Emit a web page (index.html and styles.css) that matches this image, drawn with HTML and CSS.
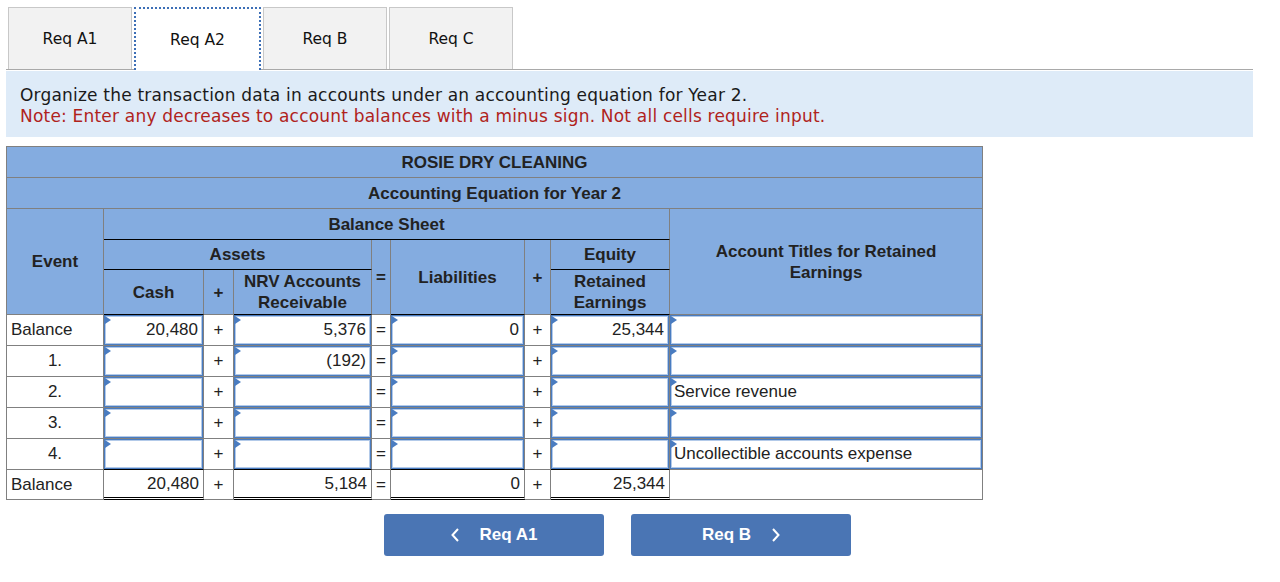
FILE: index.html
```html
<!DOCTYPE html>
<html lang="en">
<head>
<meta charset="utf-8">
<title>Accounting Equation</title>
<link rel="stylesheet" href="styles.css">
</head>
<body>
<div class="page">
  <div class="tabs">
    <div class="tab">Req A1</div>
    <div class="tab active">Req A2</div>
    <div class="tab">Req B</div>
    <div class="tab">Req C</div>
  </div>

  <div class="instructions">
    <p>Organize the transaction data in accounts under an accounting equation for Year 2.</p>
    <p class="note">Note: Enter any decreases to account balances with a minus sign. Not all cells require input.</p>
  </div>

  <table class="eq">
    <colgroup>
      <col class="c-event">
      <col class="c-cash">
      <col class="c-op1">
      <col class="c-nrv">
      <col class="c-op2">
      <col class="c-liab">
      <col class="c-op3">
      <col class="c-re">
      <col class="c-titles">
    </colgroup>
    <thead>
      <tr class="h31"><th colspan="9">ROSIE DRY CLEANING</th></tr>
      <tr class="h31"><th colspan="9">Accounting Equation for Year 2</th></tr>
      <tr class="h31">
        <th rowspan="3">Event</th>
        <th colspan="7" class="bb">Balance Sheet</th>
        <th rowspan="3" class="titles">Account Titles for Retained Earnings</th>
      </tr>
      <tr class="h30">
        <th colspan="3" class="bb">Assets</th>
        <th rowspan="2" class="op">=</th>
        <th rowspan="2" class="bb">Liabilities</th>
        <th rowspan="2" class="op">+</th>
        <th class="bb">Equity</th>
      </tr>
      <tr class="h45">
        <th class="bb">Cash</th>
        <th class="op">+</th>
        <th class="bb">NRV Accounts Receivable</th>
        <th class="bb">Retained Earnings</th>
      </tr>
    </thead>
    <tbody>
      <tr class="h31">
        <td class="ev-left">Balance</td>
        <td class="in"><div class="inp">20,480</div></td>
        <td class="op">+</td>
        <td class="in"><div class="inp">5,376</div></td>
        <td class="op">=</td>
        <td class="in"><div class="inp">0</div></td>
        <td class="op">+</td>
        <td class="in"><div class="inp">25,344</div></td>
        <td class="in"><div class="inp text"></div></td>
      </tr>
      <tr class="h31">
        <td class="ev">1.</td>
        <td class="in"><div class="inp"></div></td>
        <td class="op">+</td>
        <td class="in"><div class="inp">(192)</div></td>
        <td class="op">=</td>
        <td class="in"><div class="inp"></div></td>
        <td class="op">+</td>
        <td class="in"><div class="inp"></div></td>
        <td class="in"><div class="inp text"></div></td>
      </tr>
      <tr class="h31">
        <td class="ev">2.</td>
        <td class="in"><div class="inp"></div></td>
        <td class="op">+</td>
        <td class="in"><div class="inp"></div></td>
        <td class="op">=</td>
        <td class="in"><div class="inp"></div></td>
        <td class="op">+</td>
        <td class="in"><div class="inp"></div></td>
        <td class="in"><div class="inp text">Service revenue</div></td>
      </tr>
      <tr class="h31">
        <td class="ev">3.</td>
        <td class="in"><div class="inp"></div></td>
        <td class="op">+</td>
        <td class="in"><div class="inp"></div></td>
        <td class="op">=</td>
        <td class="in"><div class="inp"></div></td>
        <td class="op">+</td>
        <td class="in"><div class="inp"></div></td>
        <td class="in"><div class="inp text"></div></td>
      </tr>
      <tr class="h31">
        <td class="ev">4.</td>
        <td class="in bb"><div class="inp"></div></td>
        <td class="op">+</td>
        <td class="in bb"><div class="inp"></div></td>
        <td class="op">=</td>
        <td class="in bb"><div class="inp"></div></td>
        <td class="op">+</td>
        <td class="in bb"><div class="inp"></div></td>
        <td class="in"><div class="inp text">Uncollectible accounts expense</div></td>
      </tr>
      <tr class="h30 total">
        <td class="ev-left">Balance</td>
        <td class="num dbl">20,480</td>
        <td class="op">+</td>
        <td class="num dbl">5,184</td>
        <td class="op">=</td>
        <td class="num dbl">0</td>
        <td class="op">+</td>
        <td class="num dbl">25,344</td>
        <td></td>
      </tr>
    </tbody>
  </table>

  <div class="nav">
    <button class="btn" type="button">
      <svg class="chev" width="8" height="14" viewBox="0 0 8 14"><polyline points="7,1 1.5,7 7,13" fill="none" stroke="#fff" stroke-width="2"/></svg>
      <span>Req A1</span>
    </button>
    <button class="btn" type="button">
      <span>Req B</span>
      <svg class="chev" width="8" height="14" viewBox="0 0 8 14"><polyline points="1,1 6.5,7 1,13" fill="none" stroke="#fff" stroke-width="2"/></svg>
    </button>
  </div>
</div>
</body>
</html>
```

FILE: styles.css
```css
* {
  box-sizing: border-box;
}

body {
  margin: 0;
  background: #ffffff;
  font-family: "Liberation Sans", Arial, sans-serif;
  color: #222222;
}

.page {
  padding: 7px 0 0 6px;
  width: 1260px;
}

/* Tabs */
.tabs {
  display: flex;
  gap: 2px;
  padding-left: 2px;
  width: 1247px;
  height: 63px;
  border-bottom: 1px solid #a9a9a9;
}

.tab {
  width: 124px;
  height: 62px;
  display: flex;
  align-items: center;
  justify-content: center;
  background: #f2f2f2;
  border: 1px solid #c8c8c8;
  border-bottom: none;
  font-family: "DejaVu Sans", Verdana, sans-serif;
  font-size: 15.5px;
  color: #111111;
}

.tab.active {
  width: 127px;
  height: 63px;
  background: #ffffff;
  border: 2px dotted #3d6fb6;
  border-bottom: none;
}

/* Instructions */
.instructions {
  margin-top: 1px;
  width: 1247px;
  background: #deebf8;
  padding: 14px 14px 10px;
  font-family: "DejaVu Sans", Verdana, sans-serif;
  font-size: 17px;
  letter-spacing: 0.2px;
  line-height: 21px;
  color: #1a1a1a;
}

.instructions p {
  margin: 0;
  white-space: nowrap;
}

.instructions .note {
  color: #b0231c;
}

/* Table */
.eq {
  margin-top: 9px;
  width: 977px;
  table-layout: fixed;
  border-collapse: separate;
  border-spacing: 0;
  border-top: 1px solid #808080;
  border-left: 1px solid #808080;
  font-size: 17px;
}

.c-event { width: 97px; }
.c-cash { width: 100px; }
.c-op1 { width: 30px; }
.c-nrv { width: 138px; }
.c-op2 { width: 19px; }
.c-liab { width: 134px; }
.c-op3 { width: 26px; }
.c-re { width: 119px; }
.c-titles { width: 313px; }

.eq th,
.eq td {
  border-right: 1px solid #808080;
  border-bottom: 1px solid #808080;
  padding: 0;
}

.eq th {
  background: #84ace0;
  font-weight: bold;
  text-align: center;
  vertical-align: middle;
  line-height: 21px;
  color: #222222;
  padding: 0 4px;
}

.eq th.titles {
  padding: 0 24px;
}

.eq th.op {
  padding: 0;
}

.eq .bb {
  border-bottom-color: #000000;
}

.h31 { height: 31px; }
.h30 { height: 30px; }
.h45 { height: 45px; }

.eq td {
  vertical-align: middle;
  line-height: 20px;
}

.eq td.ev-left {
  text-align: left;
  padding-left: 4px;
}

.eq td.ev {
  text-align: center;
}

.eq td.op {
  text-align: center;
}

.eq td.num {
  text-align: right;
  padding-right: 4px;
}

.eq td.dbl {
  border-bottom: 3px double #000000;
}

.inp {
  position: relative;
  height: 30px;
  border: 1px solid #4a7cc0;
  box-shadow: inset 0 0 0 1px #b3cae9;
  text-align: right;
  padding-right: 4px;
  line-height: 28px;
  white-space: nowrap;
  overflow: hidden;
}

.inp.text {
  text-align: left;
  padding-left: 3px;
}

.inp::before {
  content: "";
  position: absolute;
  top: 0;
  left: 0;
  width: 0;
  height: 0;
  border-left: 6px solid #4a7cc0;
  border-top: 4px solid transparent;
  border-bottom: 4px solid transparent;
}

/* Navigation */
.nav {
  display: flex;
  gap: 27px;
  margin-top: 14px;
  padding-left: 378px;
}

.btn {
  width: 220px;
  height: 42px;
  display: flex;
  align-items: center;
  justify-content: center;
  gap: 21px;
  background: #4a75b4;
  border: none;
  border-radius: 3px;
  color: #ffffff;
  font-family: "Liberation Sans", Arial, sans-serif;
  font-weight: bold;
  font-size: 17px;
  padding: 0;
}

.chev {
  display: block;
}
```
